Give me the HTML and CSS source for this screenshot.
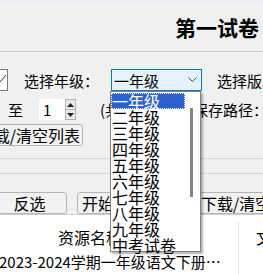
FILE: index.html
```html
<!DOCTYPE html>
<html lang="zh-CN">
<head>
<meta charset="utf-8">
<title>第一试卷</title>
<link rel="stylesheet" href="styles.css">
</head>
<body>
<div class="window">

  <div class="topStrip"></div>
  <div class="titleBar"><h1 class="title">第一试卷</h1></div>
  <div class="rule"></div>

  <!-- grade / edition selection -->
  <div class="row row1">
    <div class="combo comboStub">
      <svg width="18" height="20" viewBox="0 0 18 20"><path d="M6 7 L11 12 L17 5" fill="none" stroke="#333" stroke-width="1"/></svg>
    </div>
    <span class="label gradeLabel">选择年级：</span>
    <div class="combo comboFocus">
      <span class="comboText">一年级</span>
      <svg width="9" height="6" viewBox="0 0 9 6"><path d="M0.5 0.5 L4.5 4.5 L8.5 0.5" fill="none" stroke="#444" stroke-width="1"/></svg>
    </div>
    <span class="label editionLabel">选择版本：</span>
  </div>

  <!-- page range and save path -->
  <div class="row row2">
    <span class="label toLabel">至</span>
    <div class="spin">
      <span class="spinValue">1</span>
      <div class="spinArrows">
        <div class="spinBtn"><svg width="7" height="4" viewBox="0 0 7 4"><path d="M0 4 L3.5 0 L7 4 Z" fill="#222"/></svg></div>
        <div class="spinBtn"><svg width="7" height="4" viewBox="0 0 7 4"><path d="M0 0 L3.5 4 L7 0 Z" fill="#222"/></svg></div>
      </div>
    </div>
    <span class="label totalLabel">(共 1 页)</span>
    <span class="label pathLabel">保存路径：</span>
  </div>

  <div class="row row3">
    <button class="btn clearBtn">全部下载/清空列表</button>
  </div>

  <div class="rule lightRule firstRule"></div>
  <div class="rule lightRule secondRule"></div>

  <div class="row row4">
    <button class="btn invertBtn">反选</button>
    <button class="btn startBtn">开始下载</button>
    <button class="btn downBtn">下载/清空列表</button>
  </div>

  <!-- resource list -->
  <div class="tree">
    <div class="treeHead">
      <div class="cell nameCol headCell">资源名称</div>
      <div class="cell typeCol headCell">文件</div>
    </div>
    <div class="treeRow">
      <div class="cell nameCol rowCell">2023-2024学期一年级语文下册…</div>
      <div class="cell typeCol rowCell"></div>
    </div>
  </div>

  <!-- open grade dropdown -->
  <div class="dropList">
    <div class="item selected">一年级</div>
    <div class="item">二年级</div>
    <div class="item">三年级</div>
    <div class="item">四年级</div>
    <div class="item">五年级</div>
    <div class="item">六年级</div>
    <div class="item">七年级</div>
    <div class="item">八年级</div>
    <div class="item">九年级</div>
    <div class="item">中考试卷</div>
    <div class="thumb"></div>
  </div>

</div>
</body>
</html>
```

FILE: styles.css
```css
body
{
    margin:           0;
    background-color: #f0f0f0;
    font-family:      "Noto Sans CJK SC", sans-serif;
    font-size:        15px;
    color:            #000;
    overflow:         hidden;
}

.window
{
    position: relative;
    width:    263px;
    height:   274px;
    overflow: hidden;
}

.topStrip
{
    height:           3px;
    background-color: #e9eef6;
}

.titleBar
{
    height:          48px;
    display:         flex;
    justify-content: flex-end;
    align-items:     center;
    padding-right:   4px;
}

.title
{
    margin:      0;
    font-size:   21px;
    font-weight: bold;
    line-height: 1;
}

.rule
{
    height:           1px;
    background-color: #cccccc;
}

.lightRule
{
    background-color: #d7d7d7;
}

.firstRule
{
    margin-top: 12px;
}

.secondRule
{
    margin-top: 14px;
}

.row
{
    display:     flex;
    align-items: center;
    white-space: nowrap;
}

.label
{
    line-height: 1;
    flex:        none;
}

.row1
{
    margin-top: 17px;
    height:     22px;
}

.combo
{
    box-sizing:  border-box;
    height:      22px;
    display:     flex;
    align-items: center;
    flex:        none;
}

.comboStub
{
    width:            20px;
    margin-left:      -12px;
    background-color: #fff;
    border:           1px solid #7a7a7a;
}

.gradeLabel
{
    width:       86px;
    margin-left: 16px;
}

.comboFocus
{
    width:            91px;
    margin-left:      1px;
    padding:          0 4px 0 2px;
    justify-content:  space-between;
    background-color: #e5f1fb;
    border:           1px solid #0078d7;
}

.comboText
{
    line-height: 1;
}

.editionLabel
{
    margin-left: 15px;
}

.row2
{
    margin-top: 8px;
    height:     21px;
}

.toLabel
{
    width:       16px;
    margin-left: 8px;
}

.spin
{
    display:     flex;
    height:      21px;
    margin-left: 15px;
    flex:        none;
}

.spinValue
{
    width:            26px;
    box-sizing:       border-box;
    padding-left:     4px;
    background-color: #fff;
    line-height:      21px;
}

.spinArrows
{
    width:          11px;
    display:        flex;
    flex-direction: column;
}

.spinBtn
{
    flex:             1;
    display:          flex;
    align-items:      center;
    justify-content:  center;
    background-color: #e8e8e8;
    border:           1px solid #b4b4b4;
}

.spinBtn + .spinBtn
{
    border-top: none;
}

.totalLabel
{
    width:       93px;
    margin-left: 24px;
}

.row3
{
    margin-top: 4px;
    height:     22px;
}

.btn
{
    box-sizing:       border-box;
    height:           22px;
    padding:          0;
    font-family:      inherit;
    font-size:        16px;
    line-height:      1;
    color:            #000;
    background-color: #f2f2f2;
    border:           1px solid #b5b5b5;
    border-radius:    3px;
    flex:             none;
    white-space:      nowrap;
}

.clearBtn
{
    width:         143px;
    margin-left:   -60px;
    text-align:    right;
    padding-right: 2px;
}

.row4
{
    margin-top: 18px;
    height:     22px;
}

.invertBtn
{
    width:       75px;
    margin-left: -8px;
}

.startBtn
{
    width:        70px;
    margin-left:  10px;
    text-align:   left;
    padding-left: 4px;
}

.downBtn
{
    width:        120px;
    margin-left:  30px;
    text-align:   left;
    padding-left: 23px;
}

.tree
{
    border-top:       1px solid #d0d0d0;
    background-color: #fff;
    height:           60px;
    padding-top:      7px;
    box-sizing:       border-box;
}

.treeHead,
.treeRow
{
    display: flex;
}

.cell
{
    box-sizing:  border-box;
    line-height: 1;
    white-space: nowrap;
    overflow:    hidden;
    flex:        none;
}

.nameCol
{
    width:        239px;
    border-right: 1px solid #e2e2e2;
}

.typeCol
{
    width:        60px;
    padding-left: 17px;
}

.headCell
{
    height:      26px;
    padding-top: 7px;
    font-size:   16px;
}

.headCell.nameCol
{
    padding-left: 58px;
}

.rowCell
{
    height:      26px;
    padding-top: 6px;
}

.rowCell.nameCol
{
    margin-left: -1px;
    width:       240px;
}

.dropList
{
    position:         absolute;
    left:             110px;
    top:              91px;
    width:            91px;
    height:           161px;
    box-sizing:       border-box;
    padding-top:      1px;
    background-color: #fff;
    border:           1px solid #828282;
    box-shadow:       2px 2px 2px rgba(0, 0, 0, 0.3);
}

.item
{
    height:       16px;
    line-height:  16px;
    font-size:    16px;
    padding-left: 1px;
    box-sizing:   border-box;
    width:        74px;
    white-space:  nowrap;
}

.selected
{
    background-color: #2f62d1;
    color:            #fff;
    outline:          1px dotted #fff;
    outline-offset:   -1px;
}

.thumb
{
    position:         absolute;
    left:             79px;
    top:              16px;
    width:            3px;
    height:           89px;
    background-color: #858585;
}
```
